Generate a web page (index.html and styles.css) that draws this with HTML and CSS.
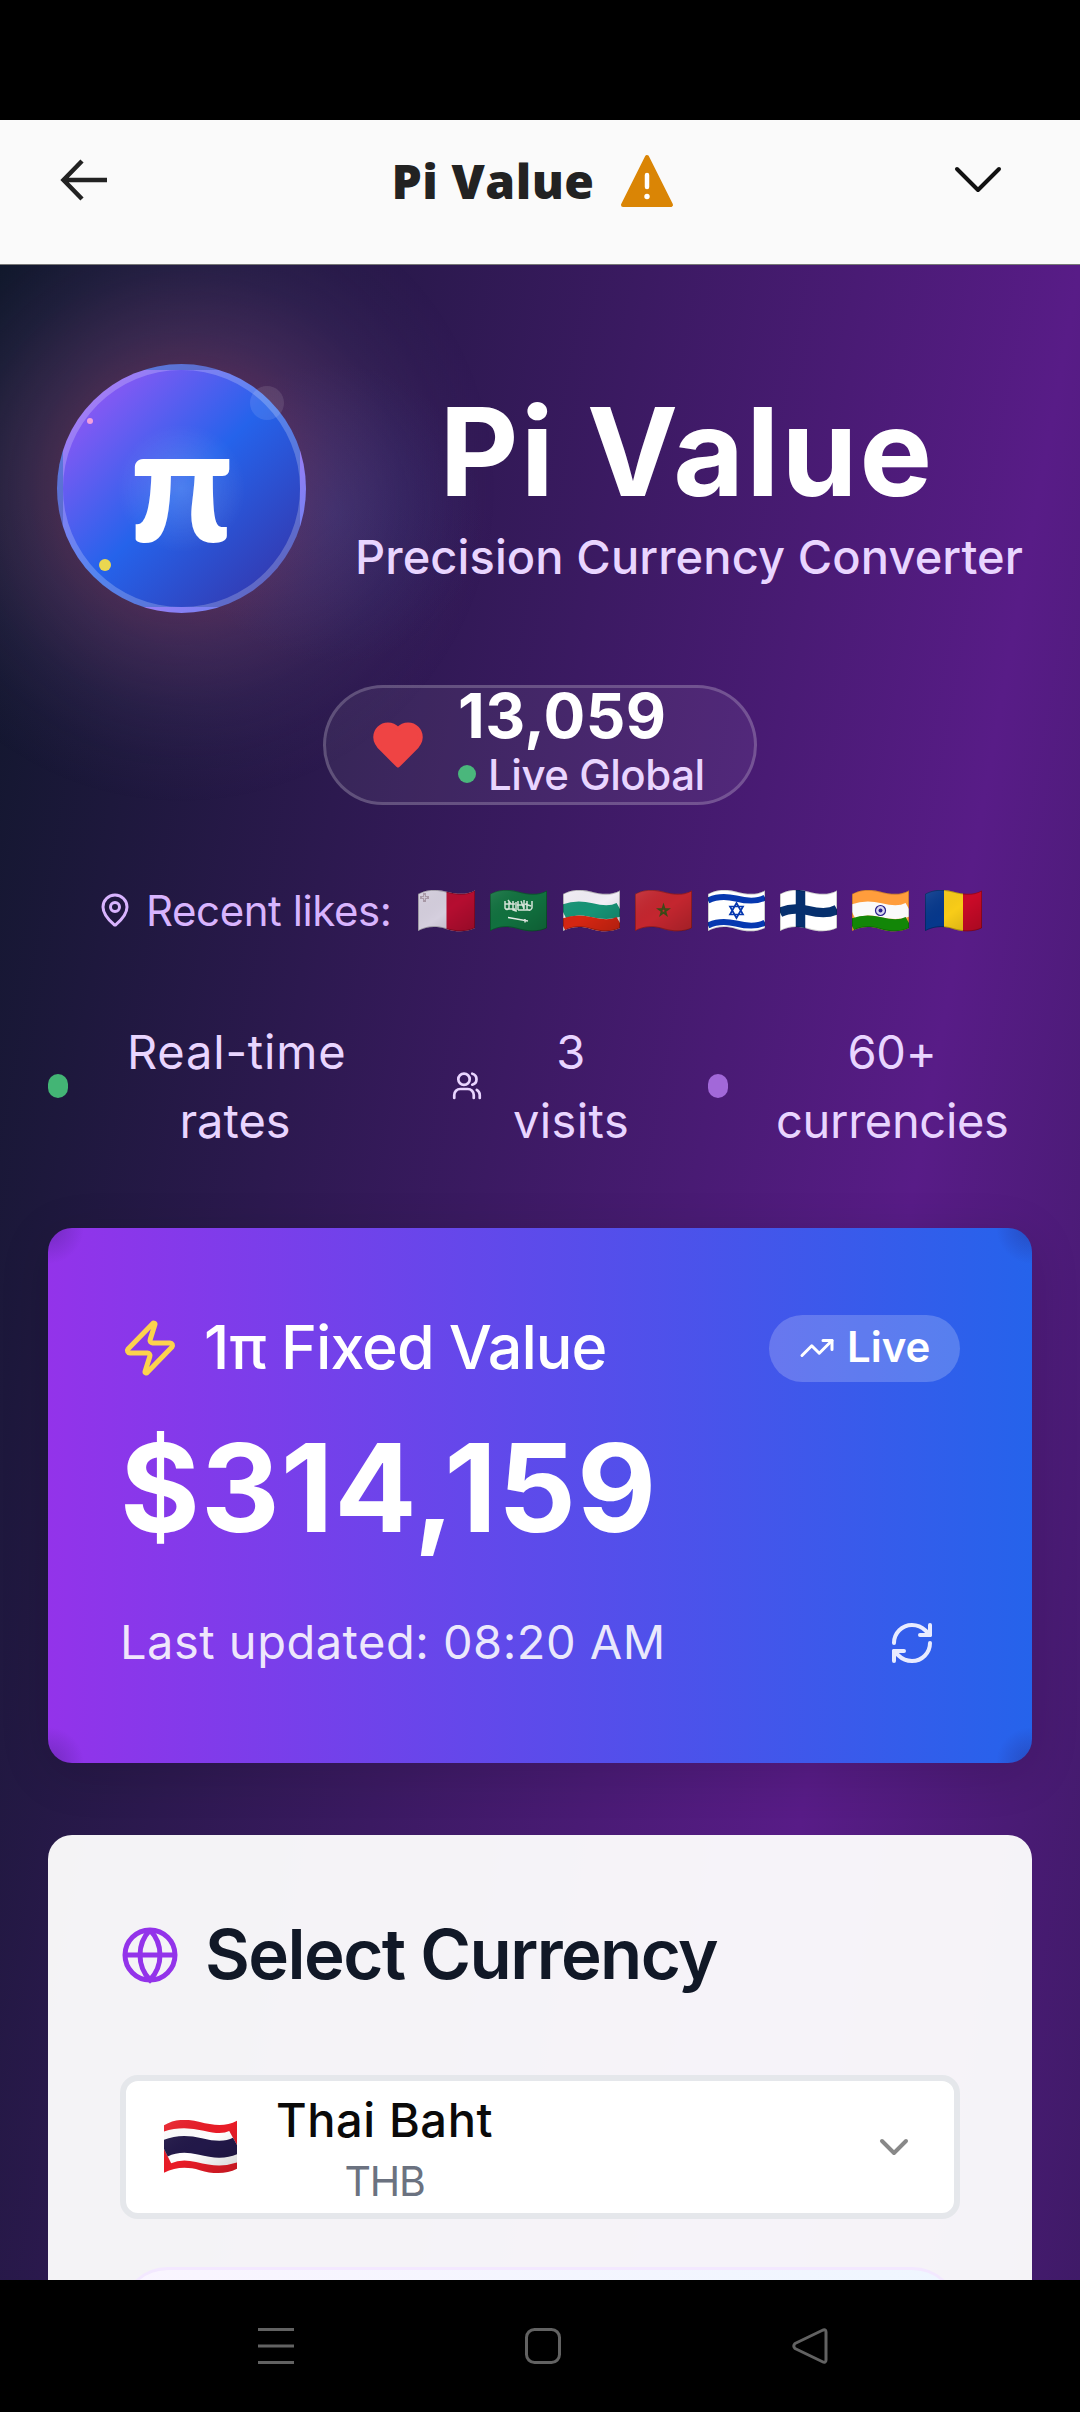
FILE: index.html
```html
<!DOCTYPE html>
<html lang="en">
<head>
<meta charset="utf-8">
<title>Pi Value</title>
<link rel="stylesheet" href="styles.css">
</head>
<body>
<svg class="defs" width="0" height="0" aria-hidden="true">
  <defs>
    <clipPath id="wave"><path d="M0 4C9 -1 18 -1 28 1.500S48 5.500 57 0.500V38C48 42.500 38 42 28 39S9 36.500 0 41Z"/></clipPath>
    <linearGradient id="shade" x1="0" y1="0" x2="1" y2="1"><stop offset="0" stop-color="#fff" stop-opacity=".1"/><stop offset=".5" stop-color="#000" stop-opacity="0"/><stop offset="1" stop-color="#000" stop-opacity=".18"/></linearGradient>
    <path id="edge" d="M.5 4C9 -.5 18 -.5 28 2S48 6 56.500 1V38C48 42 38 41.500 28 38.500S9 36 .5 40.500Z"/>
    <path id="band" d="M0 3.500C9 -1 18 -1 28 1.500S48 5.500 57 0.500"/>
  </defs>
</svg>
<div class="statusbar"></div>
<header class="appbar">
  <svg class="back" width="48" height="42" viewBox="0 0 48 42" fill="none" stroke="#222" stroke-width="4.500"><path d="M47 21H4M22 2L3.500 21L22 40"/></svg>
  <div class="apptitle"><span class="appname">Pi Value</span>
    <svg width="54" height="54" viewBox="0 0 54 54"><path d="M27 3L51 51H3Z" fill="#da8505" stroke="#da8505" stroke-width="4" stroke-linejoin="round"/><path d="M27 21V33" stroke="#fff" stroke-width="4.500" stroke-linecap="round"/><circle cx="27" cy="42.500" r="2.700" fill="#fff"/></svg>
  </div>
  <svg class="down" width="48" height="28" viewBox="0 0 48 28" fill="none" stroke="#111" stroke-width="4" stroke-linecap="round" stroke-linejoin="round"><path d="M3 3L24 24L45 3"/></svg>
</header>
<main class="page">
  <section class="hero">
    <div class="logo-wrap">
      <div class="glow"></div>
      <div class="logo"><span class="pi">π</span></div>
      <i class="bubble"></i><i class="spark pink"></i><i class="spark yellow"></i>
    </div>
    <div class="brand">
      <h1>Pi Value</h1>
      <p class="tagline">Precision Currency Converter</p>
    </div>
  </section>

  <div class="likes">
    <svg width="54" height="54" viewBox="0 0 24 24" fill="#ef4444" stroke="#ef4444" stroke-width="2" stroke-linejoin="round"><path d="M19 14c1.490-1.460 3-3.210 3-5.500A5.500 5.500 0 0 0 16.500 3c-1.760 0-3 .5-4.500 2-1.500-1.500-2.740-2-4.500-2A5.500 5.500 0 0 0 2 8.500c0 2.300 1.500 4.050 3 5.500l7 7Z"/></svg>
    <div class="like-text">
      <strong>13,059</strong>
      <span class="live-global"><i></i><b>Live Global</b></span>
    </div>
  </div>

  <div class="recent">
    <svg class="pin" width="36" height="36" viewBox="0 0 24 24" fill="none" stroke="#d8b4fe" stroke-width="2"><path d="M20 10c0 4.990-5.540 10.190-7.400 11.800a1 1 0 0 1-1.200 0C9.540 20.190 4 14.990 4 10a8 8 0 0 1 16 0"/><circle cx="12" cy="10" r="3"/></svg>
    <span class="recent-label">Recent likes:</span>
    <div class="flags">
      <svg class="flag" viewBox="0 0 57 42"><g clip-path="url(#wave)"><path fill="#d5cfde" d="M0 0h57v42H0z"/><path fill="#b50d30" d="M28.500 0H57v42H28.500z"/><path d="M6.500 3v9M2 7.500h9" stroke="#a898a6" stroke-width="3"/><path d="M6.500 5v5M4 7.500h5" stroke="#d5cfde" stroke-width=".8"/><path fill="url(#shade)" d="M0 0h57v42H0z"/></g><use href="#edge" fill="none" stroke="#000" stroke-opacity=".25"/></svg>
      <svg class="flag" viewBox="0 0 57 42"><g clip-path="url(#wave)"><path fill="#11713f" d="M0 0h57v42H0z"/><path d="M15 11v7q2 3 4 0v-7M18 10l3 4M23 11v9l3 1v-9M28 11v9M31 11l3 8v-9M37 11v8q3 3 5-1v-7M15 14h10M27 15h7M35 14l6 2M16 19h9M28 20h12" fill="none" stroke="#d6e6da" stroke-width="1.500"/><path d="M18 27.500L38 31M35 29v3.500" stroke="#e8f0ea" stroke-width="1.500"/><path fill="url(#shade)" d="M0 0h57v42H0z"/></g><use href="#edge" fill="none" stroke="#000" stroke-opacity=".25"/></svg>
      <svg class="flag" viewBox="0 0 57 42"><g clip-path="url(#wave)"><path fill="#f2eff6" d="M0 0h57v42H0z"/><g fill="none" stroke-width="14"><use href="#band" y="18.500" stroke="#169476"/><use href="#band" y="32.500" stroke="#d62612"/></g><path fill="url(#shade)" d="M0 0h57v42H0z"/></g><use href="#edge" fill="none" stroke="#000" stroke-opacity=".25"/></svg>
      <svg class="flag" viewBox="0 0 57 42"><g clip-path="url(#wave)"><path fill="#c4262f" d="M0 0h57v42H0z"/><path d="M28.500 15L31.600 25L23.300 19H33.700L25.400 25Z" fill="none" stroke="#3b4a16" stroke-width="1.500"/><path fill="url(#shade)" d="M0 0h57v42H0z"/></g><use href="#edge" fill="none" stroke="#000" stroke-opacity=".25"/></svg>
      <svg class="flag" viewBox="0 0 57 42"><g clip-path="url(#wave)"><path fill="#fff" d="M0 0h57v42H0z"/><g fill="none" stroke="#0638b0" stroke-width="6"><use href="#band" y="7"/><use href="#band" y="32"/></g><path d="M28.500 13L35 24.500H22ZM28.500 28L22 16.500H35Z" fill="none" stroke="#0638b0" stroke-width="1.700"/></g><use href="#edge" fill="none" stroke="#000" stroke-opacity=".2"/></svg>
      <svg class="flag" viewBox="0 0 57 42"><g clip-path="url(#wave)"><path fill="#fff" d="M0 0h57v42H0z"/><g stroke="#06306e" stroke-width="9.500" fill="none"><path d="M20.500 0V42"/><use href="#band" y="19"/></g></g><use href="#edge" fill="none" stroke="#000" stroke-opacity=".2"/></svg>
      <svg class="flag" viewBox="0 0 57 42"><g clip-path="url(#wave)"><path fill="#ff9d3c" d="M0 0h57v42H0z"/><g fill="none" stroke-width="14"><use href="#band" y="18.500" stroke="#fafafa"/><use href="#band" y="32.500" stroke="#128607"/></g><circle cx="28.500" cy="20.500" r="5" fill="#d9d7ee" stroke="#29208a" stroke-width="1.200"/><circle cx="28.500" cy="20.500" r="2" fill="#29208a"/></g><use href="#edge" fill="none" stroke="#000" stroke-opacity=".2"/></svg>
      <svg class="flag" viewBox="0 0 57 42"><g clip-path="url(#wave)"><path fill="#06388c" d="M0 0h19v42H0z"/><path fill="#f8cc18" d="M19 0h19v42H19z"/><path fill="#cb0a28" d="M38 0h19v42H38z"/><path fill="url(#shade)" d="M0 0h57v42H0z"/></g><use href="#edge" fill="none" stroke="#000" stroke-opacity=".25"/></svg>
    </div>
  </div>

  <div class="stats">
    <div class="stat s1"><i class="dot green"></i><p><span class="realtime">Real-time</span><br>rates</p></div>
    <div class="stat s2"><svg width="30" height="36" viewBox="0 0 20 24" fill="none" stroke="#e9d5ff" stroke-width="1.800" stroke-linecap="round"><path d="M14.500 20v-2a4 4 0 0 0-4-4h-5a4 4 0 0 0-4 4v2"/><circle cx="8" cy="7.500" r="3.800"/><path d="M18.500 20v-2a4 4 0 0 0-2-3.450M13.500 3.800a3.800 3.800 0 0 1 0 7.350"/></svg><p>3<br>visits</p></div>
    <div class="stat s3"><i class="dot violet"></i><p>60+<br>currencies</p></div>
  </div>

  <section class="value-card">
    <div class="value-head">
      <div class="value-title">
        <svg width="60" height="60" viewBox="0 0 24 24" fill="none" stroke="#fcd34d" stroke-width="2" stroke-linecap="round" stroke-linejoin="round"><path d="M4 14a1 1 0 0 1-.78-1.630l9.900-10.200a.5.500 0 0 1 .86.460l-1.920 6.020A1 1 0 0 0 13 10h7a1 1 0 0 1 .78 1.630l-9.900 10.200a.5.500 0 0 1-.86-.46l1.920-6.020A1 1 0 0 0 11 14z"/></svg>
        <h2>1π Fixed Value</h2>
      </div>
      <div class="live"><svg width="36" height="36" viewBox="0 0 24 24" fill="none" stroke="#fff" stroke-width="2" stroke-linecap="round" stroke-linejoin="round"><path d="M22 7l-8.500 8.500-5-5L2 17"/><path d="M16 7h6v6"/></svg><span>Live</span></div>
    </div>
    <div class="amount">$314,159</div>
    <div class="updated"><span>Last updated: 08:20 AM</span>
      <svg width="48" height="48" viewBox="0 0 24 24" fill="none" stroke="#e8ebff" stroke-width="2" stroke-linecap="round" stroke-linejoin="round"><path d="M3 12a9 9 0 0 1 9-9 9.750 9.750 0 0 1 6.740 2.740L21 8"/><path d="M21 3v5h-5"/><path d="M21 12a9 9 0 0 1-9 9 9.750 9.750 0 0 1-6.740-2.740L3 16"/><path d="M8 16H3v5"/></svg>
    </div>
  </section>

  <section class="currency-card">
    <div class="currency-head">
      <svg width="60" height="60" viewBox="0 0 24 24" fill="none" stroke="#9333ea" stroke-width="2"><circle cx="12" cy="12" r="10"/><path d="M12 2a14.500 14.500 0 0 0 0 20 14.500 14.500 0 0 0 0-20M2 12h20"/></svg>
      <h2>Select Currency</h2>
    </div>
    <div class="select">
      <svg class="thai" width="73" height="54" viewBox="0 0 57 42" preserveAspectRatio="none"><g clip-path="url(#wave)"><path fill="#e91c27" d="M0 0h57v42H0z"/><g fill="none"><use href="#band" y="19" stroke="#fff" stroke-width="25"/><use href="#band" y="19" stroke="#221849" stroke-width="13"/></g><path fill="url(#shade)" d="M0 0h57v42H0z"/></g></svg>
      <div class="choice"><span class="cname">Thai Baht</span><span class="code">THB</span></div>
      <svg class="chev" width="30" height="18" viewBox="0 0 30 18" fill="none" stroke="#888" stroke-width="4" stroke-linecap="round" stroke-linejoin="round"><path d="M3 3L15 15L27 3"/></svg>
    </div>
    <div class="result"></div>
  </section>
</main>
<nav class="navbar">
  <svg width="36" height="36" viewBox="0 0 36 36" stroke="#626262" stroke-width="3"><path d="M0 1.500H36M0 18H36M0 34.500H36"/></svg>
  <svg width="36" height="36" viewBox="0 0 36 36" fill="none" stroke="#626262" stroke-width="3"><rect x="1.500" y="1.500" width="33" height="33" rx="8"/></svg>
  <svg width="36" height="36" viewBox="0 0 36 36" fill="none" stroke="#626262" stroke-width="3" stroke-linejoin="round"><path d="M30 2.500Q34 .5 34 4V32Q34 35.500 30 33.500L3 20.500Q.5 18 3 15.500Z"/></svg>
</nav>
</body>
</html>
```
FILE: styles.css
```css
* { box-sizing: border-box; margin: 0; padding: 0; }
body {
  width: 1080px; height: 2412px; overflow: hidden; background: #000;
  font-family: Inter, "Liberation Sans", sans-serif;
  display: flex; flex-direction: column;
}
svg { display: block; flex: none; }
.defs { position: absolute; }
h1, h2, p, span, strong, .amount { white-space: nowrap; }
.statusbar { height: 120px; flex: none; }
.appbar {
  height: 145px; flex: none; background: #fafafa; border-bottom: 1px solid #777;
  padding: 33px 78px 0 60px; display: flex; justify-content: space-between; align-items: flex-start;
}
.back { margin-top: 6px; }
.down { margin-top: 13px; }
.apptitle { display: flex; gap: 26px; align-items: center; height: 56px; margin-left: 4px; }
.appname { font: 800 48px/56px "Open Sans", sans-serif; color: #222; letter-spacing: .5px; }
.page {
  height: 2015px; flex: none; overflow: hidden; position: relative; padding: 0 48px;
  background: linear-gradient(to bottom right, #0f172a, #581c87, #0f172a) 0 0 / 1080px 6000px no-repeat;
}
.hero { display: flex; height: 420px; padding: 99px 0 0 9px; }
.logo-wrap { position: relative; width: 249px; height: 249px; flex: none; }
.glow {
  position: absolute; inset: -190px; border-radius: 50%;
  background:
    radial-gradient(circle 150px at 74% 54%, rgba(60,80,170,.22), rgba(60,80,170,0)),
    radial-gradient(circle closest-side, rgba(176,90,140,.34) 35%, rgba(150,90,150,.25) 50%, rgba(120,85,150,.12) 70%, rgba(110,80,150,.04) 86%, rgba(110,80,150,0) 100%);
}
.logo {
  position: relative; width: 249px; height: 249px; border-radius: 50%;
  border: 6px solid rgba(255,255,255,.22);
  background: radial-gradient(circle, rgba(255,255,255,.18), rgba(255,255,255,0) 38%), linear-gradient(135deg, #a855f7, #2563eb 50%, #3730a3);
  display: flex; justify-content: center;
}
.pi { font: 900 163px/219px Lato, sans-serif; color: #fff; }
.bubble { position: absolute; left: 193px; top: 22px; width: 34px; height: 34px; border-radius: 50%; background: rgba(255,255,255,.1); }
.spark { position: absolute; border-radius: 50%; }
.pink { left: 30px; top: 54px; width: 6px; height: 6px; background: #f3a0dc; }
.yellow { left: 42px; top: 195px; width: 12px; height: 12px; background: #ead750; }
.brand { position: relative; width: 664px; margin-left: 49px; text-align: center; }
h1 { font-size: 122px; line-height: 132px; font-weight: 700; color: #fff; margin-top: 22px; letter-spacing: 2.200px; }
.tagline { font-size: 47px; line-height: 60px; font-weight: 500; color: #e9d5ff; margin-top: 9px; letter-spacing: .1px; }
.likes {
  width: 434px; height: 120px; margin: 0 auto; border: 3px solid rgba(255,255,255,.2); border-radius: 60px;
  background: rgba(255,255,255,.06); display: flex; align-items: flex-start; padding-left: 45px;
}
.likes > svg { margin-top: 30px; }
.like-text { display: flex; flex-direction: column; margin-left: 33px; }
.like-text strong { font-size: 62px; line-height: 60px; color: #fff; font-weight: 700; margin-top: -2px; letter-spacing: .4px; }
.live-global { display: flex; align-items: center; gap: 12px; height: 56px; }
.live-global i { width: 18px; height: 18px; border-radius: 50%; background: #4ab77c; }
.live-global b { font-size: 42px; font-weight: 500; color: #e9d5ff; letter-spacing: -.45px; }
.recent { display: flex; align-items: center; height: 60px; margin-top: 75px; padding-left: 49px; }
.recent-label { font-size: 42px; color: #d8b4fe; margin-left: 13px; width: 272px; letter-spacing: -.42px; }
.flags { display: flex; gap: 15.400px; padding-top: 1px; }
.flag { width: 57px; height: 42px; }
.stats { height: 140px; margin-top: 76px; display: flex; color: #e9d5ff; font-size: 47px; line-height: 69px; text-align: center; }
.stat { display: flex; align-items: center; }
.s1 { width: 404px; } .s2 { width: 256px; } .s3 { width: 324px; }
.dot { width: 20px; height: 24px; border-radius: 10px; }
.green { background: #43b575; } .violet { background: #a268d9; }
.s1 p { width: 216px; margin-left: 59px; }
.realtime { letter-spacing: .8px; }
.s2 p { width: 116px; margin-left: 31px; letter-spacing: .4px; }
.s3 p { width: 232px; margin-left: 48px; letter-spacing: -.3px; }
.value-card {
  height: 535px; margin-top: 72px; border-radius: 24px; padding: 84px 72px 0;
  background:
    radial-gradient(circle at 0 0, rgba(40,20,90,.3), transparent 36px),
    radial-gradient(circle at 100% 0, rgba(40,20,90,.3), transparent 36px),
    radial-gradient(circle at 0 100%, rgba(40,20,90,.3), transparent 36px),
    radial-gradient(circle at 100% 100%, rgba(40,20,90,.3), transparent 36px),
    linear-gradient(to right, #9333ea, #2563eb);
  color: #fff;
  box-shadow: 0 10px 50px rgba(0,0,0,.14);
}
.value-head { display: flex; justify-content: space-between; align-items: center; height: 72px; }
.value-title { display: flex; align-items: center; gap: 24px; }
.value-title h2 { font-size: 61px; font-weight: 500; letter-spacing: -1px; line-height: 70px; margin-top: -2px; }
.live { width: 191px; height: 67px; border-radius: 34px; background: rgba(255,255,255,.2); display: flex; align-items: center; padding-left: 30px; gap: 12px; font-size: 42px; line-height: 50px; font-weight: 600; }
.live span { margin-top: -2px; }
.amount { font-size: 122px; line-height: 120px; font-weight: 700; margin-top: 44px; letter-spacing: 1px; }
.updated { display: flex; justify-content: space-between; align-items: center; padding-right: 24px; height: 72px; margin-top: 59px; font-size: 47px; line-height: 58px; color: rgba(255,255,255,.88); letter-spacing: .5px; }
.updated span { margin-top: -3px; }
.currency-card { height: 700px; margin-top: 72px; border-radius: 24px; background: rgba(255,255,255,.95); padding: 84px 72px 0; }
.currency-head { display: flex; align-items: center; gap: 25px; height: 72px; }
.currency-head h2 { font-size: 69px; line-height: 80px; margin-top: -2px; font-weight: 600; color: #111827; letter-spacing: -1.600px; }
.select { height: 144px; margin-top: 84px; border: 6px solid #e5e7eb; border-radius: 18px; background: #fff; display: flex; align-items: center; padding: 0 45px 0 38px; }
.choice { display: flex; flex-direction: column; align-items: center; width: 217px; margin-left: 39px; padding-top: 3px; }
.cname { font-size: 47px; line-height: 64px; font-weight: 500; color: #0a0a0a; letter-spacing: .6px; }
.code { font-size: 41px; line-height: 58px; color: #6b7280; letter-spacing: -1.200px; }
.chev { margin-left: auto; }
.result { height: 300px; margin-top: 48px; border: 3px solid #f3e8ff; border-radius: 48px; background: linear-gradient(to right, #faf5ff, #eff6ff); }
.navbar { height: 132px; flex: none; display: flex; gap: 231px; padding: 48px 0 0 258px; }
```
